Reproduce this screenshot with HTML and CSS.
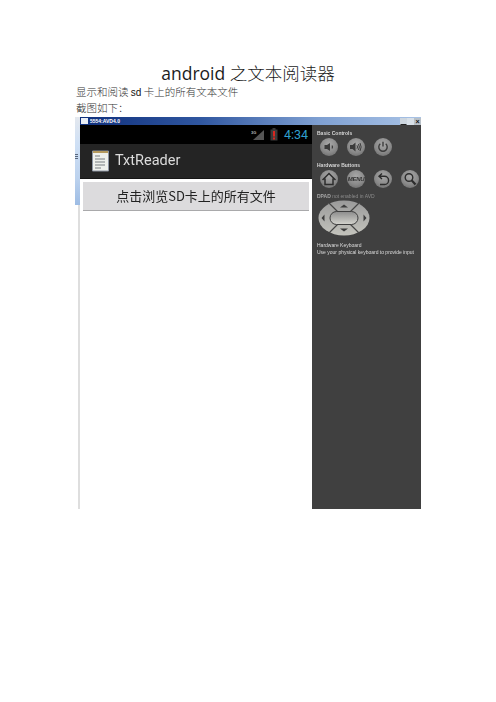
FILE: index.html
```html
<!DOCTYPE html>
<html lang="zh">
<head>
<meta charset="utf-8">
<title>android 之文本阅读器</title>
<link rel="stylesheet" href="styles.css">
</head>
<body>
<main class="page">
  <h1 class="title">android <span class="title-cn">之文本阅读器</span></h1>
  <p class="line">显示和阅读 <span class="latin">sd</span> 卡上的所有文本文件</p>
  <p class="line">截图如下：</p>
  <figure class="shot">
    <div class="strip">
      <div class="strip-blue"><i></i><i></i><i></i></div>
      <div class="strip-rest"></div>
    </div>
    <div class="window">
      <div class="titlebar">
        <span class="win-icon"></span>
        <span class="win-title">5554:AVD4.0</span>
        <span class="win-btns"><i class="min"></i><i class="max"></i><i class="close">×</i></span>
      </div>
      <div class="win-body">
        <div class="phone">
          <div class="statusbar">
            <svg class="signal" viewBox="0 0 14 12" width="14" height="12"><text x="0" y="4.500" class="g3">3G</text><path d="M13 1V11H2Z" fill="#555"/></svg>
            <svg class="battery" viewBox="0 0 8 13" width="8" height="13"><rect x="0.5" y="1.5" width="7" height="11" fill="#3a3a3a"/><rect x="2.5" y="0" width="3" height="2" fill="#3a3a3a"/><rect x="3" y="3" width="2" height="5.5" fill="#d8261f"/><rect x="3" y="9.5" width="2" height="2" fill="#d8261f"/></svg>
            <span class="clock">4:34</span>
          </div>
          <div class="actionbar">
            <svg class="doc" viewBox="0 0 17 22" width="17" height="22"><path d="M0.5 1H16.5V21H0.5Z" fill="#eef0ec" stroke="#8d95a3"/><path d="M1 1H16V3H1Z" fill="#b59a5e"/><path d="M3 6H8M3 9H13M3 12H13M3 15H13M3 18H9" stroke="#777c80" fill="none"/></svg>
            <span class="app-name">TxtReader</span>
          </div>
          <div class="content">
            <button class="browse" type="button">点击浏览SD卡上的所有文件</button>
          </div>
        </div>
        <aside class="panel">
          <h2 class="label">Basic Controls</h2>
          <div class="keys">
            <span class="key"><svg viewBox="0 0 18 18"><path d="M4.500 7H7L10 5V13L7 11H4.500Z" fill="#3b3b3b"/><path d="M12 7.500Q13 9 12 10.500" stroke="#3b3b3b" stroke-width="1.200" fill="none"/></svg></span>
            <span class="key"><svg viewBox="0 0 18 18"><path d="M3 7H5.500L8.500 4.500V13.500L5.500 11H3Z" fill="#3b3b3b"/><path d="M10 7.300Q11 9 10 10.700M11.500 6Q13.200 9 11.500 12M13 5Q15.300 9 13 13" stroke="#3b3b3b" fill="none"/></svg></span>
            <span class="key"><svg viewBox="0 0 18 18"><path d="M6.300 5.800A4.200 4.200 0 1 0 11.700 5.800M9 3.800V8.600" stroke="#3b3b3b" stroke-width="1.400" fill="none"/></svg></span>
          </div>
          <h2 class="label hw">Hardware Buttons</h2>
          <div class="keys">
            <span class="key"><svg viewBox="0 0 18 18"><path d="M2.500 10L9 3.500L15.500 10M5 8.500V14.500H13V8.500" stroke="#2c2c2c" stroke-width="1.500" fill="none"/></svg></span>
            <span class="key"><span class="menu">MENU</span></span>
            <span class="key"><svg viewBox="0 0 18 18"><path d="M8 3.500L5 6.300L8 9M5.500 6.300H10.500A3.900 3.900 0 0 1 10.500 14.500H6" stroke="#2c2c2c" stroke-width="1.400" fill="none"/></svg></span>
            <span class="key"><svg viewBox="0 0 18 18"><circle cx="8" cy="7.500" r="3.800" stroke="#2c2c2c" stroke-width="1.400" fill="none"/><path d="M10.800 10.500L14.500 14.500" stroke="#2c2c2c" stroke-width="2.200"/></svg></span>
          </div>
          <h2 class="label dim"><b>DPAD</b> not enabled in AVD</h2>
          <svg class="dpad" viewBox="0 0 52 36" width="52" height="36">
            <defs>
              <linearGradient id="dp" x1="0" y1="0" x2="0" y2="1"><stop offset="0" stop-color="#9a9a9a"/><stop offset="1" stop-color="#c4c4bd"/></linearGradient>
              <linearGradient id="dc" x1="0" y1="0" x2="0" y2="1"><stop offset="0" stop-color="#8c8c8c"/><stop offset="1" stop-color="#d4d4ce"/></linearGradient>
            </defs>
            <ellipse cx="26" cy="18" rx="25.500" ry="17.500" fill="url(#dp)"/>
            <path d="M11 3L20 12M41 3L32 12M11 33L20 24M41 33L32 24" stroke="#454545" stroke-width="1.200"/>
            <rect x="12" y="11.500" width="28" height="13" rx="6.500" fill="url(#dc)" stroke="#3f3f3f"/>
            <path d="M26 4.500L30 7.500H22ZM26 31.500L30 28.500H22ZM3.500 18L6.500 14.500V21.500ZM48.500 18L45.500 14.500V21.500Z" fill="#3d3d3d"/>
          </svg>
          <h2 class="label kb">Hardware Keyboard<br>Use your physical keyboard to provide input</h2>
        </aside>
      </div>
    </div>
  </figure>
</main>
</body>
</html>
```

FILE: styles.css
```css
* { box-sizing: border-box; }
html, body { margin: 0; padding: 0; background: #fff; }
body { width: 496px; height: 702px; overflow: hidden; font-family: "Noto Sans CJK SC", sans-serif; }
.page { padding: 62px 0 0 75px; }
.title {
  margin: 0 75px 0 0;
  text-align: center;
  font-family: "Open Sans", "Noto Sans CJK SC", sans-serif;
  font-weight: 400;
  font-size: 17.500px;
  line-height: 21px;
  color: #1c1c1c;
}
.title-cn { font-family: "Noto Sans CJK SC", sans-serif; font-weight: 300; }
.line {
  margin: 0;
  font-size: 10.500px;
  line-height: 15px;
  color: #333;
  font-weight: 300;
  padding-left: 1px;
}
.latin { font-family: "Liberation Sans", sans-serif; font-size: 10px; font-weight: 400; color: #111; }
.shot {
  margin: 2px 0 0;
  width: 346px;
  height: 392px;
  display: flex;
  filter: blur(.3px);
}
.strip { width: 5px; flex: none; display: flex; flex-direction: column; }
.strip-blue {
  height: 88px;
  flex: none;
  background: linear-gradient(#e4e8ee, #cfe0f5 30%, #bcd2ee 70%, #9dbce4);
  display: flex;
  flex-direction: column;
  gap: 1px;
  padding-top: 37px;
}
.strip-blue i { display: block; height: 1px; width: 3px; background: #59677d; }
.strip-rest { flex: 1; border-right: 2px solid #dedede; }
.window { flex: 1; display: flex; flex-direction: column; min-width: 0; }
.titlebar {
  height: 8px;
  flex: none;
  display: flex;
  align-items: center;
  background: linear-gradient(90deg, #0f2f7c, #2f569f 35%, #7fa0d2 70%, #a9c3e6);
  padding-left: 1px;
}
.win-icon { width: 7px; height: 6px; background: #e9eef6; }
.win-title { margin-left: 2px; font: 700 5px/8px "Liberation Sans", sans-serif; color: #fff; }
.win-btns { margin-left: auto; display: flex; }
.win-btns i { display: block; width: 7px; height: 7px; background: #cdd6df; }
.win-btns .min { border-bottom: 1px solid #222; border-left: 1px solid #cdd6df; border-right: 1px solid #cdd6df; }
.win-btns .max { background: #d8e0e8; }
.win-btns .close { background: #b8c0c8; font: 700 7px/7px "Liberation Sans", sans-serif; text-align: center; color: #111; }
.win-body { flex: 1; display: flex; min-height: 0; }
.phone { width: 232px; flex: none; display: flex; flex-direction: column; }
.statusbar {
  height: 19px;
  flex: none;
  background: #000;
  display: flex;
  align-items: center;
  justify-content: flex-end;
  padding-right: 5px;
}
.signal { margin-right: 5px; }
.g3 { font: 700 4px "Liberation Sans", sans-serif; fill: #bbb; }
.battery { margin-right: 6px; }
.clock { font: 400 12.500px/19px Roboto, sans-serif; color: #2f9fcd; width: 23px; }
.actionbar {
  height: 35px;
  flex: none;
  background: #242424;
  border-bottom: 1px solid #161616;
  display: flex;
  align-items: center;
  padding-left: 12px;
  gap: 6px;
}
.app-name { font: 400 14.500px/20px Roboto, sans-serif; color: #dcdcdc; }
.content { flex: 1; background: #fff; padding: 3px 3px 0; }
.browse {
  display: block;
  width: 226px;
  height: 29px;
  padding: 0;
  border: 0;
  border-bottom: 1px solid #a9a9ab;
  background: #dcdbdd;
  font: 400 13px/28px "Noto Sans CJK SC", sans-serif;
  color: #222;
}
.panel {
  flex: 1;
  min-width: 0;
  background: #404040;
  padding: 5px 0 0 5px;
  display: flex;
  flex-direction: column;
}
.label {
  margin: 0;
  font: 700 5px/6px "Liberation Sans", sans-serif;
  color: #d4d4d4;
  white-space: nowrap;
}
.label.hw { margin-top: 1px; }
.label.dim { font-weight: 400; color: #8b8b8b; }
.label.dim b { color: #a5a5a5; }
.label.kb { margin-top: 6px; font-weight: 400; color: #dcdcdc; line-height: 6.500px; }
.keys { display: flex; gap: 9px; margin: 2px 0 5px 3px; }
.key {
  width: 18px; height: 18px;
  flex: none;
  border-radius: 50%;
  background: radial-gradient(circle at 50% 35%, #a8a8a8, #8a8a8a 55%, #626262);
  display: flex;
  align-items: center;
  justify-content: center;
}
.key svg { width: 18px; height: 18px; display: block; }
.menu { font: italic 700 6px/18px "Liberation Sans", sans-serif; color: #333; letter-spacing: -.3px; }
.dpad { display: block; margin: 1px 0 0 1px; flex: none; }
```
